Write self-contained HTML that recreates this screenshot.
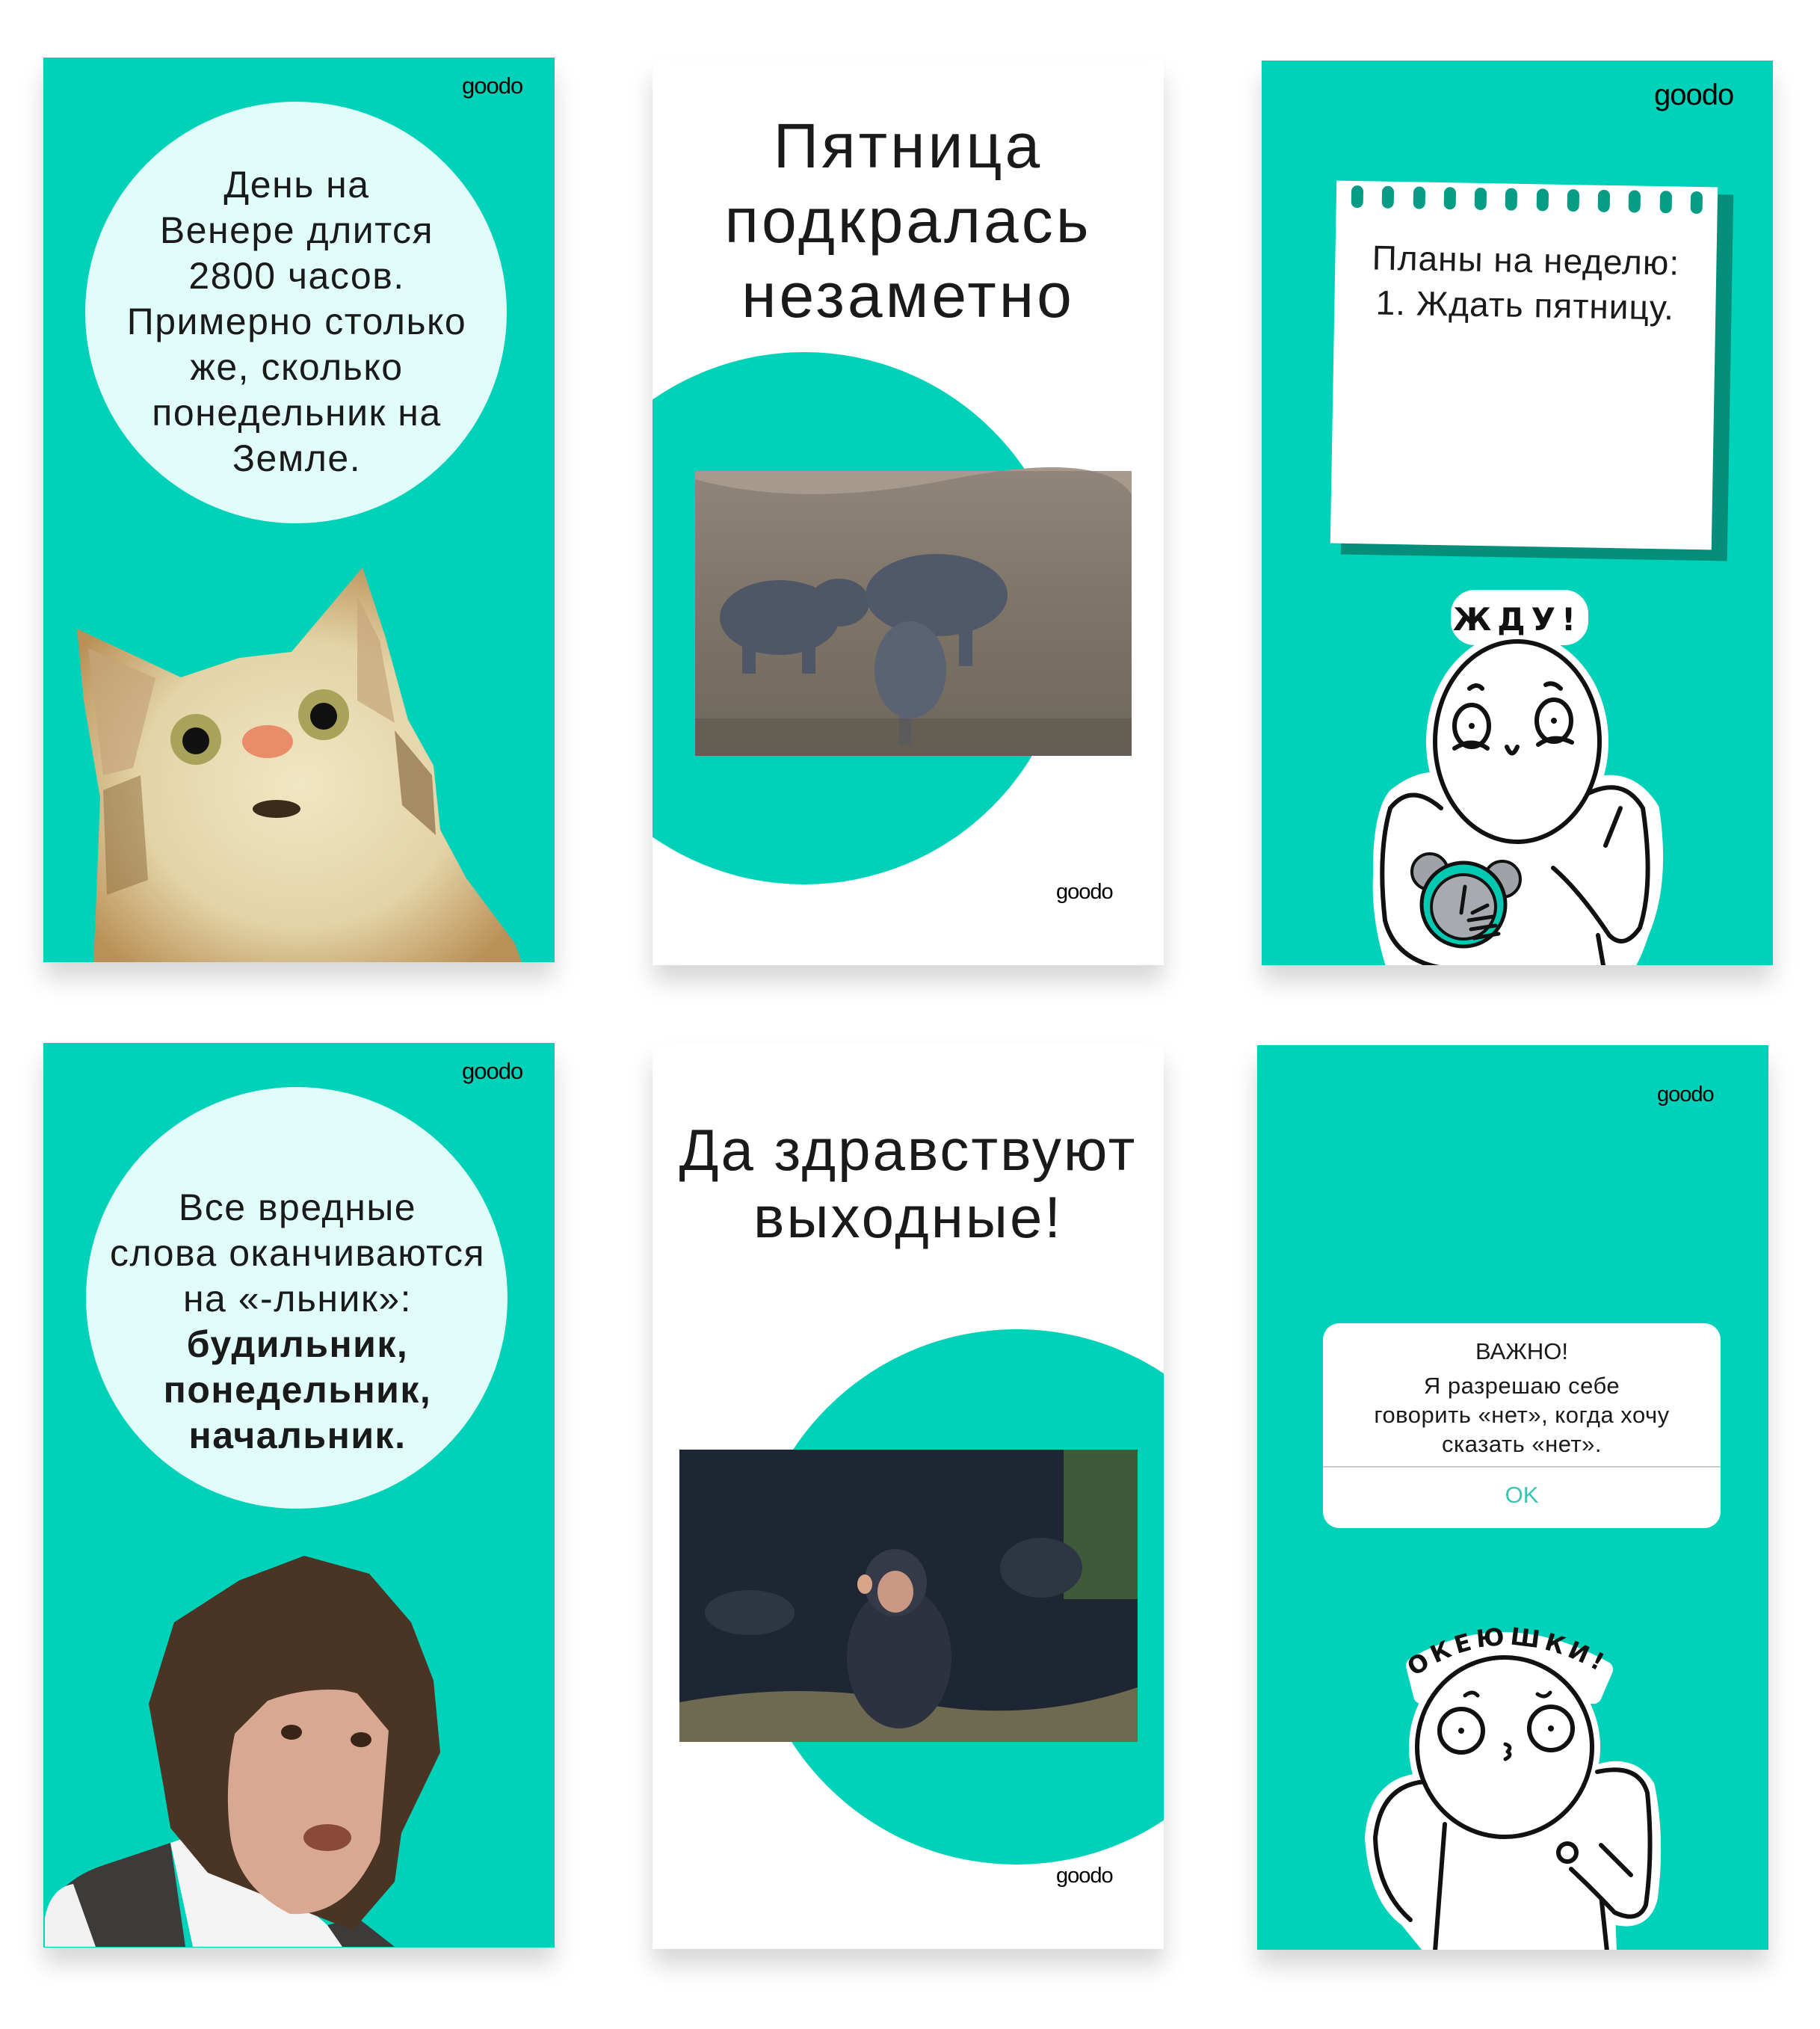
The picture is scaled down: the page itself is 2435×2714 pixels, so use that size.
<!DOCTYPE html>
<html><head><meta charset="utf-8">
<style>
*{margin:0;padding:0;box-sizing:border-box}
html,body{width:2435px;height:2714px;background:#fff;overflow:hidden;font-family:"Liberation Sans",sans-serif;color:#111}
.p{position:absolute;width:684px;height:1210px;overflow:hidden;box-shadow:0 22px 30px rgba(0,0,0,0.16)}
.t{background:#00d1b9}
.w{background:#fff}
.logo{position:absolute;font-size:31px;letter-spacing:-1px;color:#000;font-family:"Liberation Sans",sans-serif}
.circ{position:absolute;border-radius:50%;background:#e0fdf9}
.ctext{position:absolute;left:0;width:100%;text-align:center;font-size:50px;letter-spacing:1.5px;line-height:61px;color:#1a1a1a}
.title{position:absolute;left:0;width:100%;text-align:center;color:#1a1a1a}
svg{position:absolute;left:0;top:0}
</style></head><body>

<!-- Panel 1 -->
<div class="p t" style="left:58px;top:77px">
  <div class="logo" style="left:560px;top:20px">goodo</div>
  <div class="circ" style="left:56px;top:59px;width:564px;height:564px"></div>
  <div class="ctext" style="top:140px;left:42px;width:594px">День на<br>Венере длится<br>2800 часов.<br>Примерно столько<br>же, сколько<br>понедельник на<br>Земле.</div>
  <svg width="684" height="1210" viewBox="0 0 684 1210">
    <defs>
      <radialGradient id="cf" cx="0.5" cy="0.55" r="0.6"><stop offset="0" stop-color="#f1e6c4"/><stop offset="0.6" stop-color="#e3d3a6"/><stop offset="1" stop-color="#b99158"/></radialGradient>
    </defs>
    <path d="M45 764 L184 829 L262 803 L332 795 L427 682 L457 773 L488 886 L522 947 L531 1033 L566 1098 L631 1185 L640 1210 L67 1210 L71 1120 L76 990 L54 860 Z" fill="url(#cf)"/>
    <path d="M60 790 L150 830 L120 950 L80 960 Z" fill="#c4a57a" opacity="0.7"/>
    <path d="M420 720 L450 780 L470 890 L420 860 Z" fill="#c4a57a" opacity="0.7"/>
    <path d="M470 900 L520 960 L525 1040 L480 1000 Z" fill="#7a5a33" opacity="0.6"/>
    <path d="M80 980 L130 960 L140 1100 L85 1120 Z" fill="#8a6a3a" opacity="0.5"/>
    <circle cx="204" cy="912" r="34" fill="#a9a25a"/><circle cx="204" cy="914" r="18" fill="#111"/>
    <circle cx="375" cy="879" r="34" fill="#a9a25a"/><circle cx="375" cy="881" r="18" fill="#111"/>
    <ellipse cx="300" cy="915" rx="34" ry="22" fill="#e88c6a"/>
    <ellipse cx="312" cy="1005" rx="32" ry="12" fill="#3a2a1a"/>
  </svg>
</div>

<!-- Panel 2 -->
<div class="p w" style="left:873px;top:81px">
  <div class="title" style="top:64px;font-size:84px;letter-spacing:4px;line-height:100px">Пятница<br>подкралась<br>незаметно</div>
  <div style="position:absolute;left:-153px;top:390px;width:712px;height:712px;border-radius:50%;background:#00d1b9"></div>
  <svg width="684" height="1210" viewBox="0 0 684 1210">
    <defs><linearGradient id="mud" x1="0" y1="0" x2="0" y2="1"><stop offset="0" stop-color="#8f857a"/><stop offset="0.5" stop-color="#7d7467"/><stop offset="1" stop-color="#6e675c"/></linearGradient></defs>
    <rect x="57" y="549" width="584" height="381" fill="url(#mud)"/>
    <path d="M57 560 Q200 600 400 560 T641 580 L641 549 L57 549Z" fill="#a59a8c"/>
    <ellipse cx="170" cy="745" rx="80" ry="50" fill="#4f5666"/>
    <ellipse cx="250" cy="725" rx="40" ry="32" fill="#4f5666"/>
    <ellipse cx="380" cy="715" rx="95" ry="55" fill="#51586a"/>
    <ellipse cx="345" cy="815" rx="48" ry="65" fill="#5a6273"/>
    <rect x="120" y="770" width="18" height="50" fill="#4f5666"/><rect x="200" y="770" width="18" height="50" fill="#4f5666"/>
    <rect x="410" y="750" width="18" height="60" fill="#51586a"/><rect x="330" y="860" width="16" height="55" fill="#5a6273"/>
    <rect x="57" y="880" width="584" height="50" fill="#5d574c" opacity="0.6"/>
  </svg>
  <div class="logo" style="left:540px;top:1096px;font-size:29px">goodo</div>
</div>

<!-- Panel 3 -->
<div class="p t" style="left:1688px;top:81px">
  <div class="logo" style="left:525px;top:24px;font-size:40px">goodo</div>
  <div style="position:absolute;left:110px;top:175px;width:517px;height:490px;background:#058f7a;transform:rotate(1deg)"></div>
  <div style="position:absolute;left:96px;top:165px;width:510px;height:485px;background:#fff;transform:rotate(1deg)">
    <div style="position:absolute;top:6px;left:20px;width:470px;display:flex;justify-content:space-between">
      <i style="width:16px;height:30px;border-radius:8px;background:#069c86"></i><i style="width:16px;height:30px;border-radius:8px;background:#069c86"></i><i style="width:16px;height:30px;border-radius:8px;background:#069c86"></i><i style="width:16px;height:30px;border-radius:8px;background:#069c86"></i><i style="width:16px;height:30px;border-radius:8px;background:#069c86"></i><i style="width:16px;height:30px;border-radius:8px;background:#069c86"></i><i style="width:16px;height:30px;border-radius:8px;background:#069c86"></i><i style="width:16px;height:30px;border-radius:8px;background:#069c86"></i><i style="width:16px;height:30px;border-radius:8px;background:#069c86"></i><i style="width:16px;height:30px;border-radius:8px;background:#069c86"></i><i style="width:16px;height:30px;border-radius:8px;background:#069c86"></i><i style="width:16px;height:30px;border-radius:8px;background:#069c86"></i>
    </div>
    <div style="position:absolute;top:72px;left:-10px;width:530px;text-align:center;font-size:46px;letter-spacing:1px;line-height:60px;color:#1a1a1a">Планы на неделю:<br>1. Ждать пятницу.</div>
  </div>
  <svg width="684" height="1210" viewBox="0 0 684 1210" fill="none" stroke-linecap="round" stroke-linejoin="round">
   <g transform="translate(60,0)">
    <g fill="#fff" stroke="#fff" stroke-width="24">
      <path d="M120 985 Q170 945 215 980 L350 990 Q420 940 460 1002 Q475 1100 446 1167 Q430 1216 418 1216 L120 1216 Q98 1150 101 1090 Q100 1010 120 985Z"/>
      <ellipse cx="282" cy="911" rx="110" ry="134"/>
      <rect x="205" y="720" width="160" height="50" rx="20"/>
    </g>
    <g fill="#fff" stroke="#111" stroke-width="6">
      <path d="M180 1000 Q140 965 112 1000 Q95 1060 105 1150 Q120 1210 200 1216"/>
      <path d="M360 990 Q420 950 450 1000 Q465 1100 446 1160 Q425 1190 405 1170 Q365 1110 330 1080"/>
      <path d="M400 1050 L420 1000"/>
      <path d="M390 1170 L398 1216"/>
      <ellipse cx="282" cy="911" rx="110" ry="134"/>
    </g>
    <g stroke="#111" stroke-width="6">
      <ellipse cx="221" cy="890" rx="23" ry="28"/><ellipse cx="331" cy="883" rx="23" ry="28"/>
      <path d="M198 920 Q221 905 242 920 M310 915 Q331 900 355 912 M268 918 Q275 935 282 918 M218 840 Q228 832 235 840 M320 835 Q330 830 340 840"/>
    </g>
    <circle cx="221" cy="890" r="4" fill="#111"/><circle cx="331" cy="883" r="4" fill="#111"/>
    <circle cx="165" cy="1085" r="24" fill="#9fa3a8" stroke="#111" stroke-width="4"/>
    <circle cx="262" cy="1095" r="24" fill="#9fa3a8" stroke="#111" stroke-width="4"/>
    <circle cx="210" cy="1129" r="56" fill="#00c9b2" stroke="#111" stroke-width="5"/>
    <circle cx="210" cy="1132" r="43" fill="#a7abb0" stroke="#111" stroke-width="4"/>
    <path d="M212 1105 L207 1140 M222 1140 L242 1130" stroke="#111" stroke-width="5"/>
    <path d="M217 1150 L250 1145 M220 1162 L253 1157 M224 1174 L257 1168" stroke="#111" stroke-width="5"/>
    <text x="282" y="762" text-anchor="middle" font-family="DejaVu Sans,sans-serif" font-weight="bold" font-size="42" fill="#111" letter-spacing="8">ЖДУ!</text>
   </g>
  </svg>
</div>

<!-- Panel 4 -->
<div class="p t" style="left:58px;top:1395px">
  <div class="logo" style="left:560px;top:20px">goodo</div>
  <div class="circ" style="left:57px;top:59px;width:564px;height:564px"></div>
  <div class="ctext" style="top:190px;left:40px;width:600px">Все вредные<br>слова оканчиваются<br>на «-льник»:<br><b>будильник,<br>понедельник,<br>начальник.</b></div>
  <svg width="684" height="1210" viewBox="0 0 684 1210">
    <path d="M2 1209 L2 1170 Q20 1120 80 1100 L170 1070 L190 1209Z" fill="#3d3b3a"/>
    <path d="M2 1209 L2 1170 Q10 1130 40 1125 L70 1209Z" fill="#f1f1f1"/>
    <path d="M170 1070 L230 1050 L380 1180 L420 1209 L200 1209Z" fill="#f4f4f4"/>
    <path d="M380 1180 L420 1170 L470 1209 L400 1209Z" fill="#3d3b3a"/>
    <path d="M141 884 L175 775 L262 719 L349 686 L436 710 L492 775 L522 853 L531 949 L479 1057 L470 1122 L414 1187 L320 1150 L220 1110 L170 1050 L160 990 Z" fill="#4a3424"/>
    <path d="M262 900 Q300 840 420 870 L462 920 L450 1070 Q410 1170 330 1165 Q260 1130 250 1060 Q240 980 262 900Z" fill="#d9a892"/>
    <path d="M230 830 Q300 780 440 820 L480 900 L470 880 Q380 850 300 880 L250 930Z" fill="#4a3424"/>
    <ellipse cx="332" cy="922" rx="14" ry="10" fill="#3a2418"/><ellipse cx="425" cy="932" rx="14" ry="10" fill="#3a2418"/>
    <ellipse cx="380" cy="1063" rx="32" ry="18" fill="#8a4a3a"/>
  </svg>
</div>

<!-- Panel 5 -->
<div class="p w" style="left:873px;top:1397px">
  <div class="title" style="top:96px;font-size:78px;letter-spacing:3px;line-height:90px">Да здравствуют<br>выходные!</div>
  <div style="position:absolute;left:129px;top:381px;width:716px;height:716px;border-radius:50%;background:#00d1b9"></div>
  <svg width="684" height="1210" viewBox="0 0 684 1210">
    <rect x="36" y="542" width="613" height="391" fill="#1f2633"/>
    <rect x="550" y="542" width="99" height="200" fill="#3e5a3a"/>
    <path d="M36 880 Q200 850 350 880 T649 860 L649 933 L36 933Z" fill="#6e6a52"/>
    <ellipse cx="330" cy="820" rx="70" ry="95" fill="#2c3240"/>
    <ellipse cx="325" cy="720" rx="42" ry="45" fill="#343a48"/>
    <ellipse cx="325" cy="732" rx="24" ry="28" fill="#c89882"/>
    <ellipse cx="284" cy="722" rx="10" ry="13" fill="#d8a58a"/>
    <ellipse cx="130" cy="760" rx="60" ry="30" fill="#2e3644"/>
    <ellipse cx="520" cy="700" rx="55" ry="40" fill="#2e3644"/>
  </svg>
  <div class="logo" style="left:540px;top:1096px;font-size:29px">goodo</div>
</div>

<!-- Panel 6 -->
<div class="p t" style="left:1682px;top:1398px">
  <div class="logo" style="left:535px;top:50px;font-size:29px">goodo</div>
  <div style="position:absolute;left:88px;top:372px;width:532px;height:274px;background:#fff;border-radius:22px;overflow:hidden">
    <div style="position:absolute;top:20px;width:100%;text-align:center;font-size:31px;color:#1a1a1a">ВАЖНО!</div>
    <div style="position:absolute;top:64px;width:100%;text-align:center;font-size:31px;letter-spacing:0.5px;line-height:39px;color:#1a1a1a">Я разрешаю себе<br>говорить «нет», когда хочу<br>сказать «нет».</div>
    <div style="position:absolute;top:191px;left:0;width:100%;height:2px;background:#c9cccf"></div>
    <div style="position:absolute;top:212px;width:100%;text-align:center;font-size:31px;color:#3dc3b1">OK</div>
  </div>
  <svg width="684" height="1211" viewBox="0 0 684 1211" fill="none" stroke-linecap="round" stroke-linejoin="round">
    <g fill="#fff" stroke="#fff" stroke-width="22">
      <path d="M218 985 Q160 990 155 1060 Q160 1140 201 1169 L236 1212 L470 1212 L468 1162 Q515 1180 525 1140 Q535 1060 521 992 Q500 960 460 972Z"/>
      <ellipse cx="331" cy="939" rx="117" ry="120"/>
      <path d="M210 830 Q330 760 465 835 L450 870 L220 870Z"/>
    </g>
    <g fill="#fff" stroke="#111" stroke-width="6">
      <path d="M225 985 Q165 990 158 1060 Q160 1130 205 1170"/>
      <path d="M251 1042 L238 1212 M451 1052 L468 1212"/>
      <path d="M455 972 Q510 960 522 1000 Q530 1080 520 1150 Q510 1175 478 1160 Q450 1130 420 1102"/>
      <path d="M500 1110 L460 1070"/>
      <ellipse cx="331" cy="939" rx="117" ry="120"/>
      <circle cx="273" cy="917" r="29"/><circle cx="393" cy="914" r="29"/>
      <circle cx="415" cy="1080" r="12"/>
    </g>
    <g stroke="#111" stroke-width="5">
      <path d="M278 870 Q288 862 295 870 M375 868 Q385 875 392 866 M332 935 Q342 938 335 945 Q342 950 332 955"/>
    </g>
    <circle cx="273" cy="917" r="4" fill="#111"/><circle cx="393" cy="914" r="4" fill="#111"/>
    <path id="arc" d="M210 845 Q330 760 470 845" stroke="none"/>
    <text font-family="DejaVu Sans,sans-serif" font-weight="bold" font-size="32" fill="#111" letter-spacing="6"><textPath href="#arc">ОКЕЮШКИ!</textPath></text>
  </svg>
</div>

</body></html>
